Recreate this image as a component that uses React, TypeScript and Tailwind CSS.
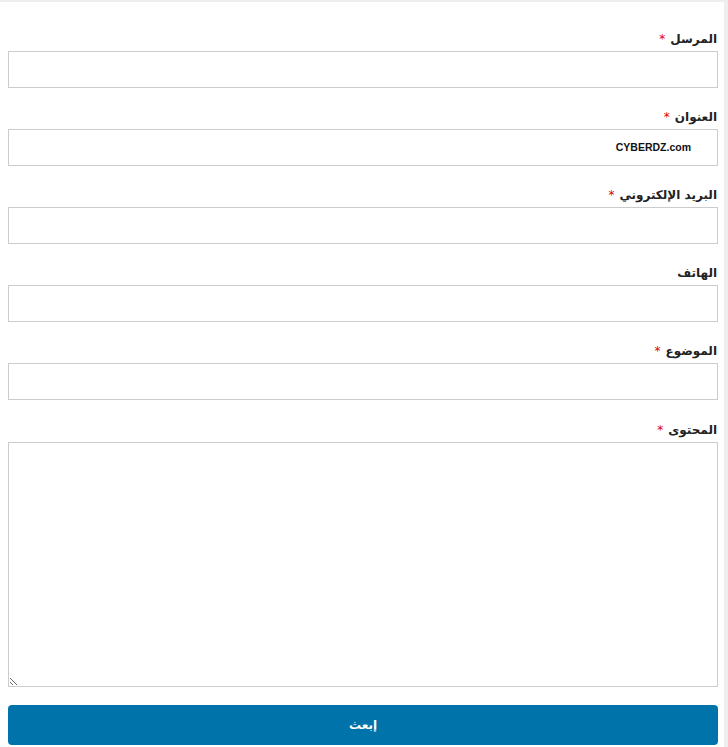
import React from "react";

const fields: { label: string; req: boolean; value?: string }[] = [
  { label: "المرسل", req: true },
  { label: "العنوان", req: true, value: "CYBERDZ.com" },
  { label: "البريد الإلكتروني", req: true },
  { label: "الهاتف", req: false },
  { label: "الموضوع", req: true },
];

function Label({ text, req }: { text: string; req: boolean }) {
  return (
    <div className="flex justify-start leading-[20px] text-[12px] font-bold text-[#222] pr-[1px]">
      <span>{text}</span>
      {req && <span className="text-[#d00] font-normal mr-[5px] text-[12px]">*</span>}
    </div>
  );
}

export default function App() {
  return (
    <div
      dir="rtl"
      className="w-[728px] h-[747px] bg-white flex"
      style={{ fontFamily: '"DejaVu Sans", Tahoma, sans-serif' }}
    >
      <div className="w-[4px] bg-[#eeeeee] shrink-0" />
      <div className="flex-1 border-t-2 border-[#eeeeee] pr-[6px] pl-[8px] pt-[27px]">
        {fields.map((f, i) => (
          <div key={i} className={i === 0 ? "" : "mt-[19px]"}>
            <Label text={f.label} req={f.req} />
            <div className="mt-[2px] h-[37px] border border-[#cccccc] bg-white flex items-center pr-[26px]">
              {f.value && (
                <span
                  className="text-[10.5px] font-bold text-[#111]"
                  style={{ fontFamily: '"Liberation Sans Narrow", "Liberation Sans", Arial, sans-serif' }}
                  dir="ltr"
                >
                  {f.value}
                </span>
              )}
            </div>
          </div>
        ))}
        <div className="mt-[20px]">
          <Label text="المحتوى" req={true} />
          <textarea
            dir="rtl"
            className="block mt-[2px] w-full h-[245px] border border-[#cccccc] bg-white outline-none"
            defaultValue=""
          />
        </div>
        <button className="mt-[18px] w-full h-[40px] rounded-[4px] bg-[#0073aa] text-white text-[12px] font-bold flex items-center justify-center">
          إبعث
        </button>
      </div>
    </div>
  );
}
